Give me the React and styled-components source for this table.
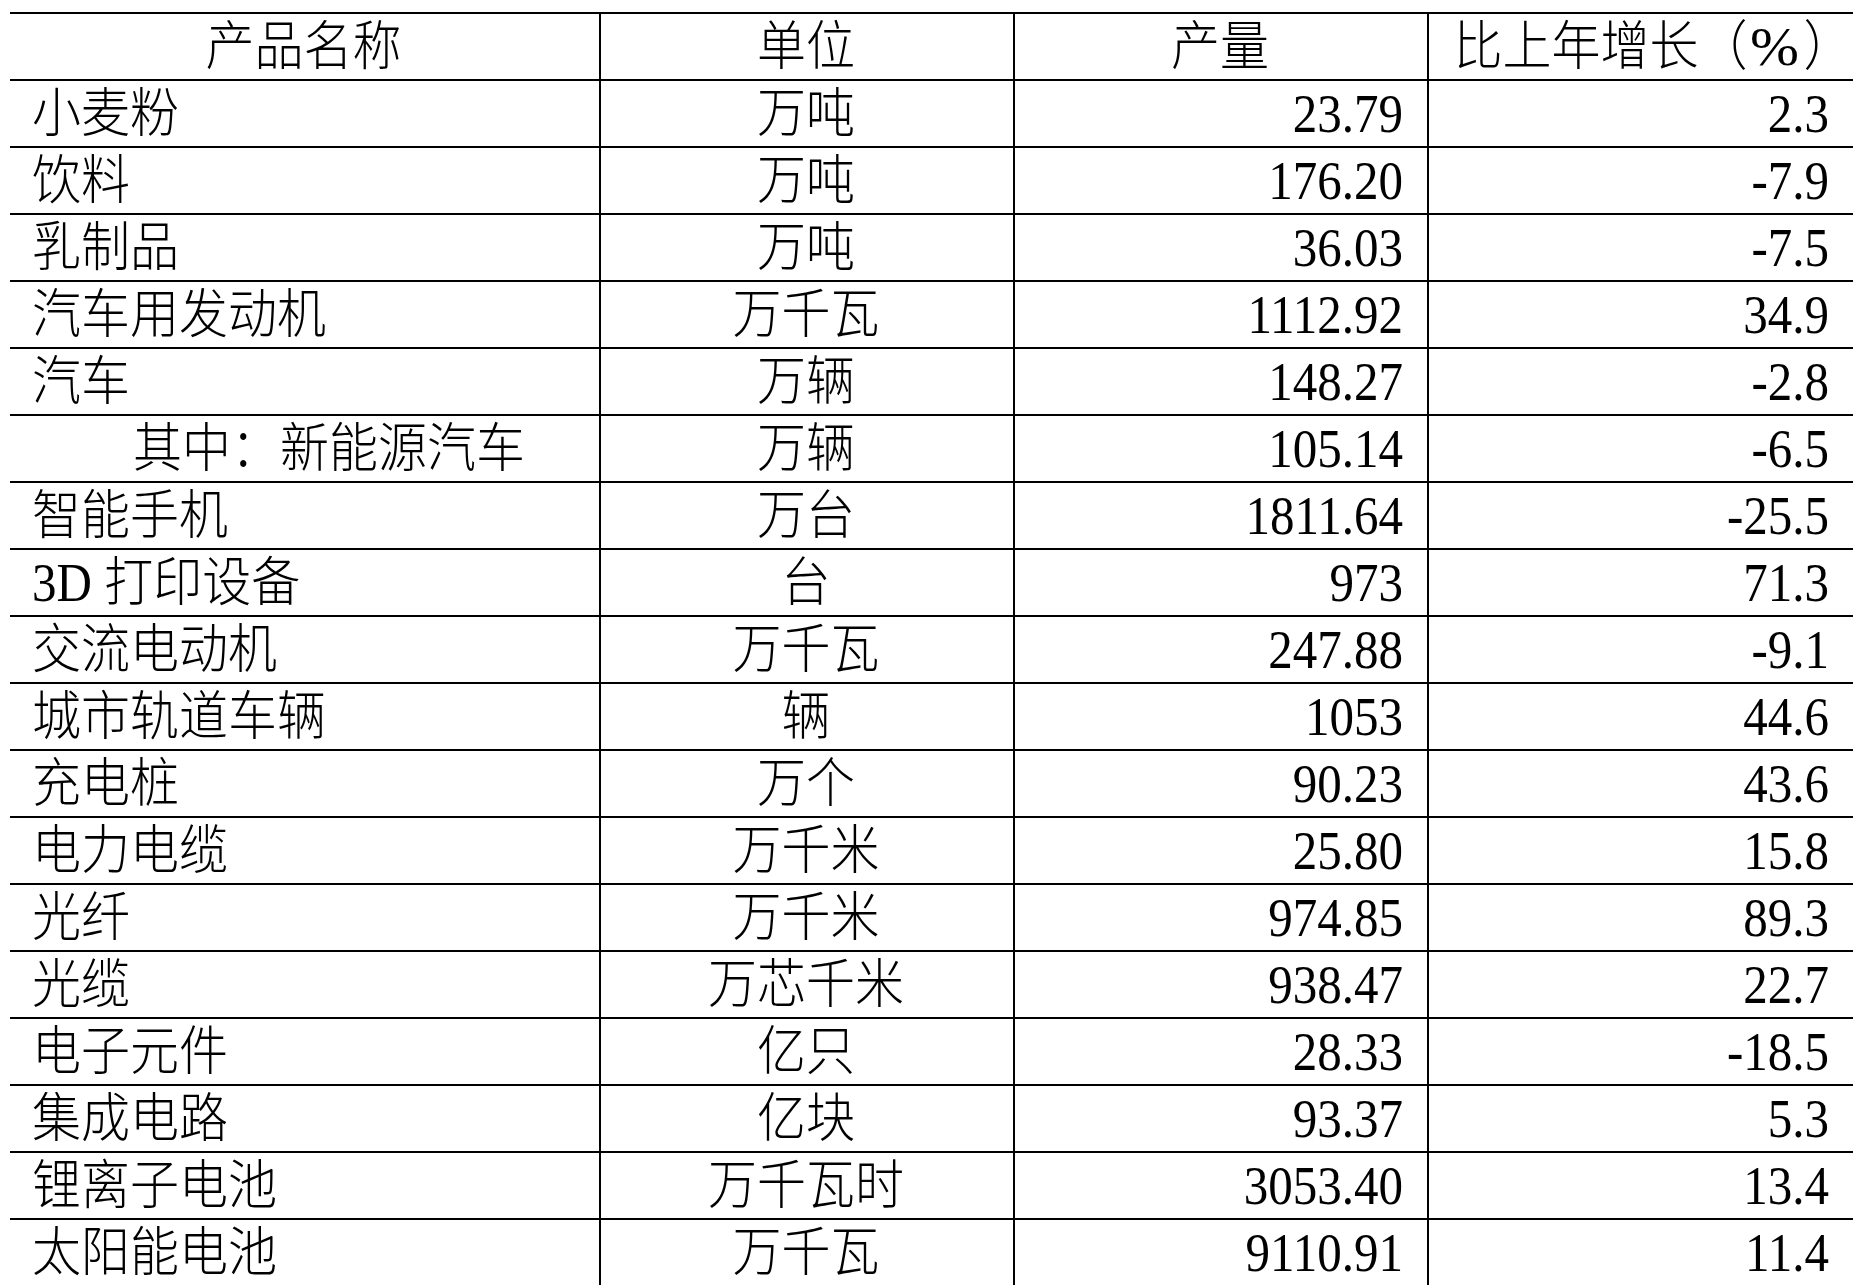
import React from 'react';
import styled, { createGlobalStyle } from 'styled-components';

const GlobalStyle = createGlobalStyle`
  html, body {
    margin: 0;
    padding: 0;
    background: #ffffff;
  }
  body {
    font-family: "Liberation Serif", "Noto Sans CJK SC", serif;
    color: #000000;
  }
`;

const rows = [
  ['小麦粉', '万吨', '23.79', '2.3'],
  ['饮料', '万吨', '176.20', '-7.9'],
  ['乳制品', '万吨', '36.03', '-7.5'],
  ['汽车用发动机', '万千瓦', '1112.92', '34.9'],
  ['汽车', '万辆', '148.27', '-2.8'],
  ['其中：新能源汽车', '万辆', '105.14', '-6.5', true],
  ['智能手机', '万台', '1811.64', '-25.5'],
  ['3D 打印设备', '台', '973', '71.3'],
  ['交流电动机', '万千瓦', '247.88', '-9.1'],
  ['城市轨道车辆', '辆', '1053', '44.6'],
  ['充电桩', '万个', '90.23', '43.6'],
  ['电力电缆', '万千米', '25.80', '15.8'],
  ['光纤', '万千米', '974.85', '89.3'],
  ['光缆', '万芯千米', '938.47', '22.7'],
  ['电子元件', '亿只', '28.33', '-18.5'],
  ['集成电路', '亿块', '93.37', '5.3'],
  ['锂离子电池', '万千瓦时', '3053.40', '13.4'],
  ['太阳能电池', '万千瓦', '9110.91', '11.4'],
];

const Page = styled.div`
  padding: 12px 2px 0 10px;
  height: 1286px;
  box-sizing: border-box;
  overflow: hidden;
`;

const Table = styled.div`
  display: grid;
  grid-template-columns: 589px 414px 414px 426px;
  grid-auto-rows: 67px;
  width: 1843px;
`;

const Cell = styled.div`
  box-sizing: border-box;
  border-top: 2px solid #000;
  border-left: ${p => (p.$first ? 'none' : '2px solid #000')};
  display: flex;
  align-items: center;
  justify-content: ${p => p.$align === 'right' ? 'flex-end' : p.$align === 'left' ? 'flex-start' : 'center'};
  padding: 0 24px 0 ${p => (p.$indent ? '123px' : '22px')};
  font-size: 49px;
  font-weight: 300;
  line-height: 1;
  white-space: nowrap;
`;

const GrowthHead = styled(Cell)`
  padding: 0 0 0 24px;
`;

const Ink = styled.span`
  display: inline-block;
  transform: scaleY(1.1);
`;

const Pct = styled.span`
  display: inline-block;
  margin: 0 9px 0 6px;
  transform: scaleX(1.2);
`;

function Row({ name, unit, amount, growth, sub }) {
  return (
    <>
      <Cell $first $align="left" $indent={sub}><Ink>{name}</Ink></Cell>
      <Cell><Ink>{unit}</Ink></Cell>
      <Cell $align="right"><Ink>{amount}</Ink></Cell>
      <Cell $align="right"><Ink>{growth}</Ink></Cell>
    </>
  );
}

export default function App() {
  return (
    <Page>
      <GlobalStyle />
      <Table>
        <Cell $first><Ink>产品名称</Ink></Cell>
        <Cell><Ink>单位</Ink></Cell>
        <Cell><Ink>产量</Ink></Cell>
        <GrowthHead><Ink>比上年增长（<Pct>%</Pct>）</Ink></GrowthHead>
        {rows.map(r => (
          <Row key={r[0]} name={r[0]} unit={r[1]} amount={r[2]} growth={r[3]} sub={r[4]} />
        ))}
      </Table>
    </Page>
  );
}
